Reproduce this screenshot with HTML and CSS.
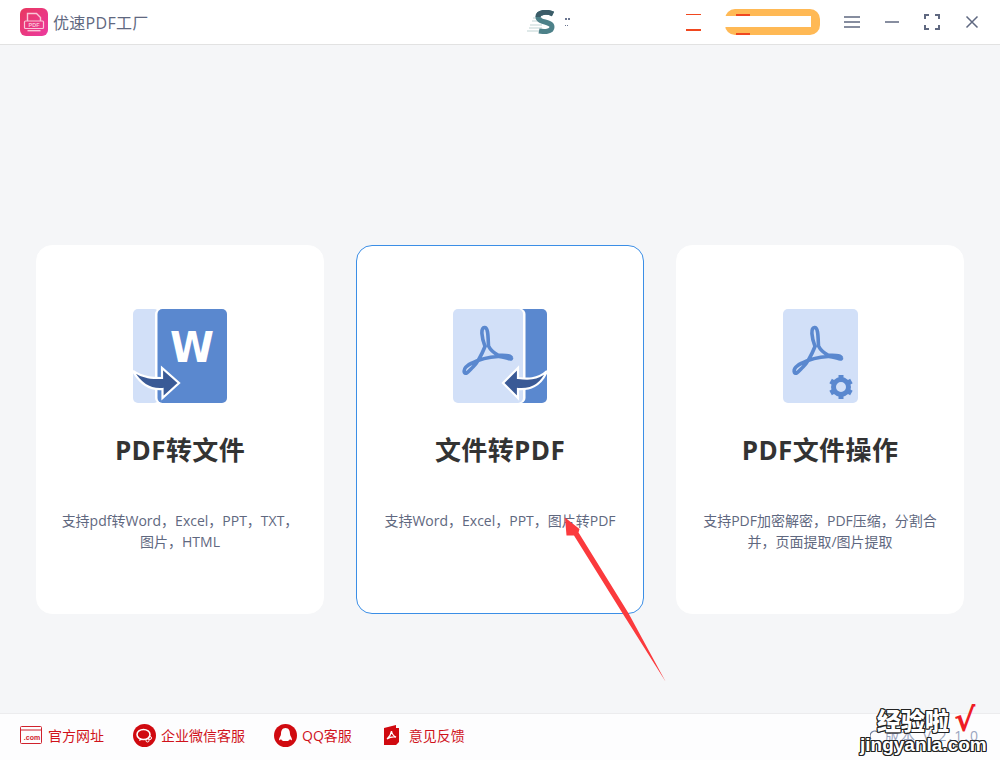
FILE: index.html
```html
<!DOCTYPE html>
<html lang="zh-CN">
<head>
    <meta charset="UTF-8">
    <title>优速PDF工厂</title>
    <link rel="stylesheet" href="styles.css">
</head>
<body>
    <!-- Title bar -->
    <div class="titlebar">
        <div class="brand">
            <svg class="brand-logo" width="28" height="28" viewBox="0 0 28 28">
                <defs>
                    <linearGradient id="logoGrad" x1="0" y1="0" x2="1" y2="1">
                        <stop offset="0" stop-color="#e8385f"/>
                        <stop offset="1" stop-color="#ec3aa0"/>
                    </linearGradient>
                </defs>
                <rect width="28" height="28" rx="6" fill="url(#logoGrad)"/>
                <path d="M7.500 13V5.500h9l4 4V13" fill="none" stroke="#f9c6d8" stroke-width="1.400"/>
                <rect x="4.500" y="13" width="19" height="7.500" rx="1" fill="none" stroke="#f9c6d8" stroke-width="1.200"/>
                <text x="14" y="19" font-size="5.500" font-weight="700" text-anchor="middle" fill="#f9c6d8" font-family="Liberation Sans">PDF</text>
                <rect x="7.500" y="22" width="13" height="1.400" fill="#f9c6d8"/>
            </svg>
            <span class="brand-name">优速PDF工厂</span>
        </div>
        <div class="bar-right">
            <svg class="user-logo" width="28" height="24" viewBox="0 0 28 24">
                <path d="M0 21h15M2 18h13M3 15h12M5 11h10M6 8h9M8 5h8" stroke="#d5e2e2" stroke-width="1.500"/>
                <path d="M26 4C20 1 11 2 11 7c0 6 14 4 14 10 0 5-8 5-13 4" fill="none" stroke="#4d8189" stroke-width="5"/>
                <path d="M26 4C20 1 11 2 11 7" fill="none" stroke="#3c5c68" stroke-width="5"/>
            </svg>
            <span class="user-dot"></span>
            <span class="vip-mark"></span>
            <div class="vip-pill"><span class="vip-cut"></span></div>
            <div class="win-buttons">
                <svg width="16" height="12" viewBox="0 0 16 12"><path d="M0 1h16M0 6h16M0 11h16" stroke="#5f6880" stroke-width="1.500"/></svg>
                <svg width="14" height="12" viewBox="0 0 14 12"><path d="M0 6h14" stroke="#5f6880" stroke-width="1.500"/></svg>
                <svg width="16" height="16" viewBox="0 0 16 16"><path d="M1 5V1h4M11 1h4v4M15 11v4h-4M5 15H1v-4" fill="none" stroke="#5f6880" stroke-width="2"/></svg>
                <svg width="14" height="14" viewBox="0 0 14 14"><path d="M1.500 1.500l11 11M12.500 1.500l-11 11" stroke="#5f6880" stroke-width="1.500"/></svg>
            </div>
        </div>
    </div>

    <!-- Feature cards -->
    <div class="main">
        <div class="card">
            <svg class="card-icon" width="94" height="94" viewBox="0 0 94 94">
                <rect width="26" height="94" rx="5" fill="#d2e0f8"/>
                <rect x="22" width="72" height="94" rx="5" fill="#fff"/>
                <rect x="24.500" width="69.500" height="94" rx="5" fill="#5a88cf"/>
                <text class="w-mark" x="37" y="53" textLength="44" lengthAdjust="spacingAndGlyphs">W</text>
                <path d="M0 62C10 69 20 69 29 69V59L46 74 29.500 89V80C18 81 8 76 0 62Z" fill="#3a5a96" stroke="#fff" stroke-width="2.200"/>
            </svg>
            <div class="card-title">PDF转文件</div>
            <p class="card-desc">支持pdf转Word，Excel，PPT，TXT，<br>图片，HTML</p>
        </div>
        <div class="card active">
            <svg class="card-icon" width="94" height="94" viewBox="0 0 94 94">
                <rect x="66" width="28" height="94" rx="5" fill="#5a88cf"/>
                <rect width="72.500" height="94" rx="5" fill="#fff"/>
                <rect width="70" height="94" rx="5" fill="#d2e0f8"/>
                <path class="acro" d="M35.500 37C35 30 35.500 18 31.500 18.500 27.500 19 28.500 28 32 37.500 29 45 24 54 20 58 16 62 13 66 11.500 63.500 10 60 14 56 19 54 27 50 37 48 45 47.500 51 47 59 52 58.500 49 58 45.500 50 46.500 45 46 41 44 37 40 35.500 37Z"/>
                <path d="M94 62C84 71 74 70 65 69V59L50 74 65 89V80C76 81 88 77 94 62Z" fill="#3a5a96" stroke="#fff" stroke-width="2.200"/>
            </svg>
            <div class="card-title">文件转PDF</div>
            <p class="card-desc">支持Word，Excel，PPT，图片转PDF</p>
        </div>
        <div class="card">
            <svg class="card-icon" width="75" height="94" viewBox="0 0 75 94">
                <rect width="75" height="94" rx="5" fill="#d2e0f8"/>
                <path class="acro" d="M35.500 37C35 30 35.500 18 31.500 18.500 27.500 19 28.500 28 32 37.500 29 45 24 54 20 58 16 62 13 66 11.500 63.500 10 60 14 56 19 54 27 50 37 48 45 47.500 51 47 59 52 58.500 49 58 45.500 50 46.500 45 46 41 44 37 40 35.500 37Z"/>
                <g transform="translate(58 78)" stroke="#5a88cf" stroke-width="5">
                    <path d="M0-12V12M-10.400-6L10.400 6M-10.400 6L10.400-6"/>
                    <circle r="7.500" fill="#d2e0f8"/>
                </g>
            </svg>
            <div class="card-title">PDF文件操作</div>
            <p class="card-desc">支持PDF加密解密，PDF压缩，分割合<br>并，页面提取/图片提取</p>
        </div>
    </div>

    <!-- Footer -->
    <div class="footer">
        <a class="foot-link">
            <svg width="23" height="18" viewBox="0 0 23 18">
                <rect x="0.500" y="0.500" width="21" height="17" rx="1" fill="none" stroke="#d0212c"/>
                <path d="M1 4h20" stroke="#d0212c"/>
                <text x="12" y="14" font-size="7" font-weight="700" text-anchor="middle" fill="#d0212c" font-family="Liberation Sans">.com</text>
            </svg>
            <span>官方网址</span>
        </a>
        <a class="foot-link">
            <svg width="23" height="23" viewBox="0 0 23 23">
                <circle cx="11.500" cy="11.500" r="11.500" fill="#d00a10"/>
                <ellipse cx="10.500" cy="10.500" rx="6.500" ry="5" fill="none" stroke="#fff" stroke-width="1.600"/>
                <path d="M7 14l-1 3 4-1.500" fill="#fff"/>
                <circle cx="17" cy="14" r="1.500" fill="none" stroke="#fff"/>
                <circle cx="14.500" cy="16.500" r="1.500" fill="none" stroke="#fff"/>
            </svg>
            <span>企业微信客服</span>
        </a>
        <a class="foot-link">
            <svg width="23" height="23" viewBox="0 0 23 23">
                <circle cx="11.500" cy="11.500" r="11.500" fill="#d00a10"/>
                <path d="M11.500 4C8 4 7 7 7 10 7 12 5 13.500 5 16c1 .5 1.500 0 2-1 .5 1 1 1.500 2 2h5c1-.5 1.500-1 2-2 .5 1 1 1.500 2 1 0-2.500-2-4-2-6 0-3-1-6-4.500-6Z" fill="#fff"/>
            </svg>
            <span>QQ客服</span>
        </a>
        <a class="foot-link doc-link">
            <svg width="16" height="21" viewBox="0 0 16 21">
                <path d="M0 3L12 0v3h3v14l-3 3H0Z" fill="#d00a10"/>
                <path d="M7.500 6C7 9 5.500 12 3 14c3-2 6-2.500 9-2-2.500-1-4-3-4.500-6Z" fill="none" stroke="#fff" stroke-width="1.300"/>
            </svg>
            <span>意见反馈</span>
        </a>
        <span class="version">
            <svg width="10" height="10" viewBox="0 0 10 10"><path d="M1 9a5 5 0 0 1 8-6" fill="none" stroke="#6f7d9c" stroke-width="1.200"/></svg>
            版本 V 2.1.0
        </span>
    </div>

    <!-- Annotation arrow drawn over the screenshot -->
    <svg class="red-arrow" width="110" height="170" viewBox="0 0 110 170">
        <polygon points="5,1.500 19.500,13 18.500,16.500 68.500,97.300 105.700,165.700 62.500,97.300 14,19.500 6.500,19.500" fill="#fb3a3d"/>
    </svg>

    <!-- Site watermark -->
    <div class="watermark">
        <div class="wm-top"><span class="wm-cn">经验啦</span><span class="wm-check">√</span></div>
        <div class="wm-url">jingyanla.com</div>
    </div>
</body>
</html>
```

FILE: styles.css
```css
* {
    box-sizing: border-box;
}

html, body {
    margin: 0;
    height: 760px;
    overflow: hidden;
}

body {
    display: flex;
    flex-direction: column;
    position: relative;
    font-family: "Open Sans", "Noto Sans CJK SC", sans-serif;
    background-color: #f5f6f8;
    color: #5f6880;
}

.titlebar {
    height: 45px;
    flex: none;
    display: flex;
    align-items: center;
    justify-content: space-between;
    padding: 0 21px 0 20px;
    background: #fff;
    border-bottom: 1px solid #e2e2e2;
}

.brand {
    display: flex;
    align-items: center;
    gap: 5px;
}

.brand-name {
    font-size: 16px;
    letter-spacing: 0.3px;
}

.bar-right {
    display: flex;
    align-items: center;
}

.user-logo {
    margin-right: 10px;
}

.user-dot {
    width: 3px;
    height: 8px;
    margin-right: 118px;
    border-top: 2px dotted #6a7590;
    border-bottom: 1px dotted #6a7590;
}

.vip-mark {
    width: 15px;
    height: 17px;
    margin-right: 24px;
    border-top: 1px solid #f0481f;
    border-bottom: 2px solid #f0481f;
}

.vip-pill {
    width: 95px;
    height: 26px;
    margin-right: 24px;
    margin-top: -1px;
    position: relative;
    background: #ffb955;
    border-radius: 10px;
}

.vip-cut {
    position: absolute;
    left: 0;
    top: 7px;
    width: 86px;
    height: 11px;
    background: #fff;
}

/* red glyph edges that stick out above and below the cut */
.vip-pill::before,
.vip-pill::after {
    content: "";
    position: absolute;
    left: 11px;
    width: 14px;
    height: 2px;
    background: #f0481f;
}

.vip-pill::before {
    top: 5px;
}

.vip-pill::after {
    top: 24px;
}

.win-buttons {
    display: flex;
    align-items: center;
    gap: 25px;
}

.main {
    flex: 1;
    display: flex;
    gap: 32px;
    padding: 200px 36px 0;
}

.card {
    width: 288px;
    height: 369px;
    display: flex;
    flex-direction: column;
    align-items: center;
    padding-top: 63px;
    background: #fff;
    border: 1px solid #fff;
    border-radius: 16px;
}

.card.active {
    border-color: #3b8ee6;
}

.card-icon {
    flex: none;
}

.w-mark {
    font-family: "DejaVu Sans", sans-serif;
    font-size: 43px;
    font-weight: 700;
    fill: #fff;
}

.acro {
    fill: none;
    stroke: #5a88cf;
    stroke-width: 3.600;
}

.card-title {
    margin-top: 28px;
    font-size: 26px;
    font-weight: 700;
    line-height: 38px;
    letter-spacing: 0.4px;
    color: #333;
}

.card-desc {
    margin: 41px 0 0;
    font-size: 14px;
    line-height: 21px;
    text-align: center;
    color: #5f6880;
}

.footer {
    height: 47px;
    flex: none;
    display: flex;
    align-items: center;
    gap: 29px;
    padding: 0 20px 4px;
    background: #fdfdfe;
    border-top: 1px solid #ececee;
}

.foot-link {
    display: flex;
    align-items: center;
    gap: 5px;
    font-size: 14px;
    color: #d0121b;
}

.doc-link {
    gap: 9px;
    margin-left: 3px;
}

.version {
    display: flex;
    align-items: center;
    gap: 5px;
    margin-left: auto;
    font-size: 14px;
    letter-spacing: 2px;
    color: #9aa5c0;
}

.red-arrow {
    position: absolute;
    left: 560px;
    top: 516px;
}

.watermark {
    position: absolute;
    left: 860px;
    top: 705px;
    width: 126px;
    font-weight: 700;
    color: #fff;
    text-align: center;
    text-shadow: 1px 0 #222, -1px 0 #222, 0 1px #222, 0 -1px #222, 1px 1px #222, -1px -1px #222, 1px -1px #222, -1px 1px #222;
}

.wm-top {
    display: flex;
    align-items: center;
    height: 30px;
    padding-left: 17px;
}

.wm-cn {
    font-family: "Noto Sans CJK SC", sans-serif;
    font-size: 24px;
    font-weight: 900;
    line-height: 30px;
}

.wm-check {
    margin-left: 5px;
    font-family: "DejaVu Sans", sans-serif;
    font-size: 32px;
    line-height: 30px;
    color: #ee1c25;
    text-shadow: none;
}

.wm-url {
    font-family: "Liberation Sans", sans-serif;
    font-size: 19px;
    line-height: 20px;
}
```
